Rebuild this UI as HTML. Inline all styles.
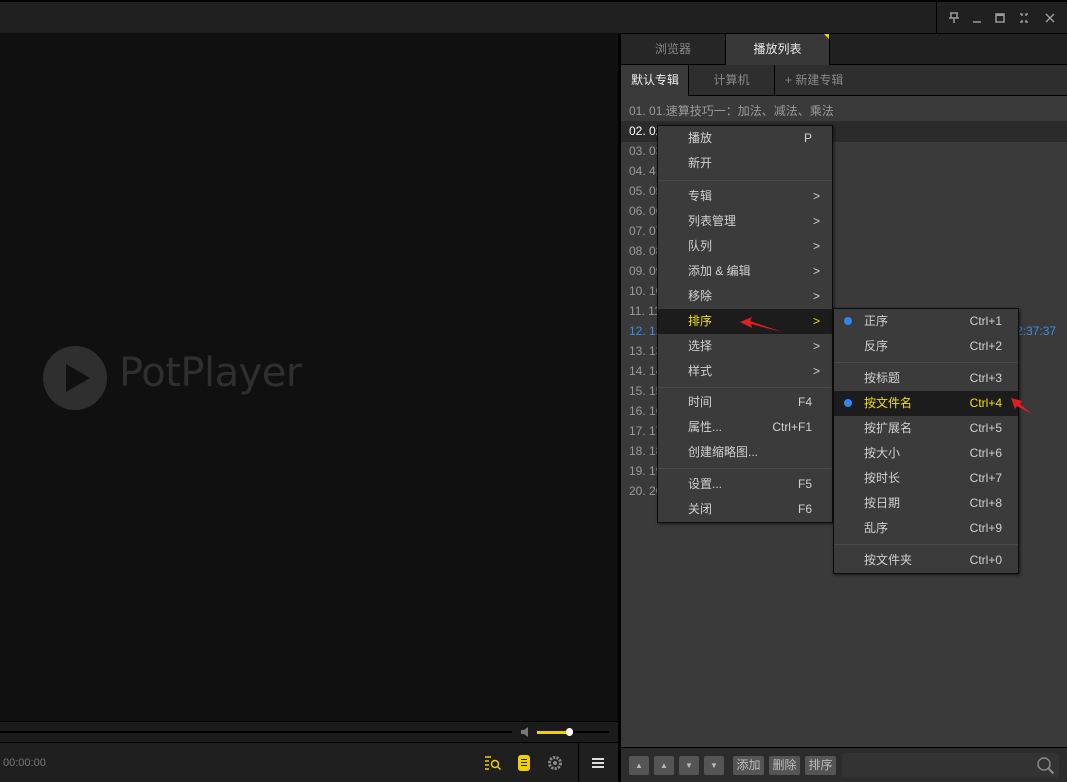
<!DOCTYPE html>
<html><head><meta charset="utf-8"><style>
*{margin:0;padding:0;box-sizing:border-box}
body{width:1067px;height:782px;background:#1e1e1e;position:relative;overflow:hidden;font-family:"Liberation Sans","Noto Sans CJK SC",sans-serif;font-size:12px;color:#c8c8c8}
.a{position:absolute}
.row{position:absolute;left:629px;color:#9a9a9a;font-size:12px;height:20px;line-height:20px;white-space:nowrap}
.menu{position:absolute;background:#3b3b3b;border:1px solid #0c0c0c;box-shadow:1px 1px 3px rgba(0,0,0,.6)}
.mi{position:absolute;left:0;right:0;height:25px;line-height:25px;color:#d0d0d0;font-size:12px}
.mi .t{position:absolute;left:30px}
.mi .k{position:absolute;right:12px}
.sep{position:absolute;left:0;right:0;height:1px;background:#242424;border-bottom:1px solid #4a4a4a}
.btn{position:absolute;top:756px;height:19px;background:#555;border-radius:2px;color:#bbb;font-size:12px;line-height:19px;text-align:center}
</style></head><body>
<div class="a" style="left:0;top:0;width:1067px;height:2px;background:#000"></div>
<div class="a" style="left:0;top:2px;width:1067px;height:31px;background:#202020"></div>
<div class="a" style="left:936px;top:2px;width:1px;height:31px;background:#000"></div>
<!-- window buttons -->
<svg class="a" style="left:940px;top:8px" width="125" height="20">
<g fill="none" stroke="#9a9a9a" stroke-width="1.5">
<path d="M10 5h8M11 5v5h6V5M9 10h10M14 10v5"/>
<path d="M33 14h8"/>
<rect x="56" y="6" width="8" height="8"/><path d="M56 7h8" stroke-width="2"/>
<path d="M80 6h2v2M88 6h-2v2M80 14h2v-2M88 14h-2v-2"/>
<path d="M106 6l8 8M114 6l-8 8"/>
</g></svg>
<!-- video area -->
<div class="a" style="left:0;top:33px;width:618px;height:688px;background:#101010"></div>
<div class="a" style="left:618px;top:33px;width:3px;height:749px;background:#000"></div>
<svg class="a" style="left:43px;top:346px" width="64" height="64"><circle cx="32" cy="32" r="32" fill="#2f2f2f"/><path d="M23 18v28l24-14z" fill="#101010"/></svg>
<div class="a" style="left:119px;top:350px;font-size:44px;color:#2f2f2f;letter-spacing:-0.5px;font-family:'DejaVu Sans',sans-serif;font-size:40px">PotPlayer</div>
<!-- seek area -->
<div class="a" style="left:0;top:721px;width:618px;height:1px;background:#000"></div>
<div class="a" style="left:0;top:722px;width:618px;height:20px;background:#1b1b1b"></div>
<div class="a" style="left:0;top:731px;width:512px;height:2px;background:#000"></div>
<svg class="a" style="left:519px;top:725px" width="14" height="14"><path d="M2 5h3l4-3v10l-4-3H2z" fill="#777"/></svg>
<div class="a" style="left:537px;top:731px;width:34px;height:3px;background:#f0d000"></div>
<div class="a" style="left:571px;top:731px;width:38px;height:2px;background:#000"></div>
<div class="a" style="left:566px;top:728px;width:7px;height:8px;border-radius:4px;background:#fff"></div>
<div class="a" style="left:0;top:742px;width:618px;height:1px;background:#000"></div>
<div class="a" style="left:0;top:743px;width:618px;height:39px;background:#1f1f1f"></div>
<div class="a" style="left:3px;top:757px;font-size:11px;color:#777">00:00:00</div>
<svg class="a" style="left:484px;top:754px" width="20" height="18"><g stroke="#f0d000" stroke-width="1.5" fill="none"><path d="M1 3h6M1 7h4M1 11h4M1 15h4"/><circle cx="11" cy="10" r="3.5"/><path d="M13.5 12.5l3 3"/></g></svg>
<div class="a" style="left:518px;top:755px;width:12px;height:16px;border-radius:3px;background:#f0d000"></div>
<div class="a" style="left:521px;top:759px;width:6px;height:1px;background:#222;box-shadow:0 3px #222,0 6px #222"></div>
<svg class="a" style="left:546px;top:754px" width="18" height="18"><circle cx="9" cy="9" r="5.5" fill="none" stroke="#8a8a8a" stroke-width="3" stroke-dasharray="2.2 1.2"/><circle cx="9" cy="9" r="2" fill="#8a8a8a"/></svg>
<div class="a" style="left:578px;top:743px;width:1px;height:39px;background:#000"></div>
<div class="a" style="left:592px;top:758px;width:12px;height:1.5px;background:#ddd;box-shadow:0 4px #ddd,0 8px #ddd"></div>
<!-- right panel -->
<div class="a" style="left:621px;top:33px;width:446px;height:749px;background:#3a3a3a"></div>
<div class="a" style="left:621px;top:33px;width:446px;height:32px;background:#202020;border-top:1px solid #000;border-bottom:1px solid #000"></div>
<div class="a" style="left:621px;top:34px;width:105px;height:30px;background:#262626;border-right:1px solid #000;color:#888;text-align:center;line-height:30px;font-size:12px">浏览器</div>
<div class="a" style="left:726px;top:34px;width:104px;height:31px;background:#383838;border-right:1px solid #000;color:#e8e8e8;text-align:center;line-height:30px;font-size:12px">播放列表</div>
<div class="a" style="left:824px;top:34px;width:0;height:0;border-top:5px solid #f0d000;border-left:5px solid transparent"></div>
<div class="a" style="left:621px;top:65px;width:446px;height:31px;background:#2e2e2e;border-bottom:1px solid #000"></div>
<div class="a" style="left:621px;top:65px;width:68px;height:31px;background:#3a3a3a;border-right:1px solid #000;color:#eee;line-height:30px;padding-left:10px">默认专辑</div>
<div class="a" style="left:689px;top:65px;width:86px;height:30px;border-right:1px solid #000;color:#888;line-height:30px;text-align:center">计算机</div>
<div class="a" style="left:785px;top:65px;color:#888;line-height:30px">+ 新建专辑</div>
<div class="a" style="left:621px;top:121px;width:446px;height:21px;background:#2b2b2b"></div>
<div class="row" style="top:101px">01. 01.速算技巧一：加法、减法、乘法</div>
<div class="row" style="top:121px;color:#fff">02. 02</div>
<div class="row" style="top:141px">03. 03</div>
<div class="row" style="top:161px">04. 4.</div>
<div class="row" style="top:181px">05. 05</div>
<div class="row" style="top:201px">06. 06</div>
<div class="row" style="top:221px">07. 07</div>
<div class="row" style="top:241px">08. 08</div>
<div class="row" style="top:261px">09. 09</div>
<div class="row" style="top:281px">10. 10</div>
<div class="row" style="top:301px">11. 11</div>
<div class="row" style="top:321px;color:#3a8ee6">12. 12</div>
<div class="row" style="left:1016px;top:321px;color:#3a8ee6">2:37:37</div>
<div class="row" style="top:341px">13. 13</div>
<div class="row" style="top:361px">14. 14</div>
<div class="row" style="top:381px">15. 15</div>
<div class="row" style="top:401px">16. 16</div>
<div class="row" style="top:421px">17. 17</div>
<div class="row" style="top:441px">18. 18</div>
<div class="row" style="top:461px">19. 19</div>
<div class="row" style="top:481px">20. 20</div>
<!-- bottom toolbar -->
<div class="a" style="left:621px;top:747px;width:446px;height:1px;background:#000"></div>
<div class="a" style="left:621px;top:748px;width:446px;height:34px;background:#2c2c2c"></div>
<div class="btn" style="left:629px;width:20px;font-size:8px">▲</div>
<div class="btn" style="left:654px;width:20px;font-size:8px">▲</div>
<div class="btn" style="left:679px;width:20px;font-size:8px">▼</div>
<div class="btn" style="left:704px;width:20px;font-size:8px">▼</div>
<div class="btn" style="left:733px;width:31px">添加</div>
<div class="btn" style="left:769px;width:31px">删除</div>
<div class="btn" style="left:805px;width:31px">排序</div>
<div class="a" style="left:842px;top:753px;width:217px;height:25px;background:#333;border-radius:3px"></div>
<svg class="a" style="left:1036px;top:756px" width="20" height="20"><circle cx="8" cy="8" r="6" fill="none" stroke="#888" stroke-width="1.5"/><path d="M12.5 12.5l5 5" stroke="#888" stroke-width="2"/></svg>
<!-- context menu -->
<div class="menu" style="left:657px;top:125px;width:176px;height:398px">
<div class="mi" style="top:0"><span class="t">播放</span><span class="k" style="right:20px">P</span></div>
<div class="mi" style="top:25px"><span class="t">新开</span></div>
<div class="sep" style="top:54px"></div>
<div class="mi" style="top:58px"><span class="t">专辑</span><span class="k">&gt;</span></div>
<div class="mi" style="top:83px"><span class="t">列表管理</span><span class="k">&gt;</span></div>
<div class="mi" style="top:108px"><span class="t">队列</span><span class="k">&gt;</span></div>
<div class="mi" style="top:133px"><span class="t">添加 &amp; 编辑</span><span class="k">&gt;</span></div>
<div class="mi" style="top:158px"><span class="t">移除</span><span class="k">&gt;</span></div>
<div class="mi" style="top:183px;background:#1c1c1c;color:#f0e000"><span class="t">排序</span><span class="k">&gt;</span></div>
<div class="mi" style="top:208px"><span class="t">选择</span><span class="k">&gt;</span></div>
<div class="mi" style="top:233px"><span class="t">样式</span><span class="k">&gt;</span></div>
<div class="sep" style="top:261px"></div>
<div class="mi" style="top:264px"><span class="t">时间</span><span class="k" style="right:20px">F4</span></div>
<div class="mi" style="top:289px"><span class="t">属性...</span><span class="k" style="right:20px">Ctrl+F1</span></div>
<div class="mi" style="top:314px"><span class="t">创建缩略图...</span></div>
<div class="sep" style="top:342px"></div>
<div class="mi" style="top:346px"><span class="t">设置...</span><span class="k" style="right:20px">F5</span></div>
<div class="mi" style="top:371px"><span class="t">关闭</span><span class="k" style="right:20px">F6</span></div>
</div>
<svg class="a" style="left:738px;top:312px" width="50" height="22"><path d="M44 20L12 9l2-4L2 10l12 6 -1-4z" fill="#e02020"/></svg>
<!-- submenu -->
<div class="menu" style="left:833px;top:308px;width:186px;height:266px">
<div class="mi" style="top:0"><span class="a" style="left:10px;top:8px;width:8px;height:8px;border-radius:4px;background:#2f86f0"></span><span class="t">正序</span><span class="k" style="right:16px">Ctrl+1</span></div>
<div class="mi" style="top:25px"><span class="t">反序</span><span class="k" style="right:16px">Ctrl+2</span></div>
<div class="sep" style="top:53px"></div>
<div class="mi" style="top:57px"><span class="t">按标题</span><span class="k" style="right:16px">Ctrl+3</span></div>
<div class="mi" style="top:82px;background:#1c1c1c;color:#f0e000"><span class="a" style="left:10px;top:8px;width:8px;height:8px;border-radius:4px;background:#2f86f0"></span><span class="t">按文件名</span><span class="k" style="right:16px">Ctrl+4</span></div>
<div class="mi" style="top:107px"><span class="t">按扩展名</span><span class="k" style="right:16px">Ctrl+5</span></div>
<div class="mi" style="top:132px"><span class="t">按大小</span><span class="k" style="right:16px">Ctrl+6</span></div>
<div class="mi" style="top:157px"><span class="t">按时长</span><span class="k" style="right:16px">Ctrl+7</span></div>
<div class="mi" style="top:182px"><span class="t">按日期</span><span class="k" style="right:16px">Ctrl+8</span></div>
<div class="mi" style="top:207px"><span class="t">乱序</span><span class="k" style="right:16px">Ctrl+9</span></div>
<div class="sep" style="top:235px"></div>
<div class="mi" style="top:239px"><span class="t">按文件夹</span><span class="k" style="right:16px">Ctrl+0</span></div>
</div>
<svg class="a" style="left:1010px;top:396px" width="24" height="20"><path d="M22 18L10 8l2-3L1 2l4 11 2-3z" fill="#e02020"/></svg>
</body></html>
